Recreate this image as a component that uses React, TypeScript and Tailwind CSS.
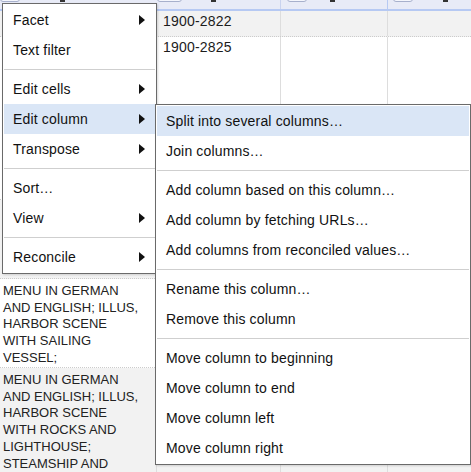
import React from 'react';

type Item = { label: string; sub?: boolean; active?: boolean } | 'sep';

const mainMenu: Item[] = [
  { label: 'Facet', sub: true },
  { label: 'Text filter' },
  'sep',
  { label: 'Edit cells', sub: true },
  { label: 'Edit column', sub: true, active: true },
  { label: 'Transpose', sub: true },
  'sep',
  { label: 'Sort…' },
  { label: 'View', sub: true },
  'sep',
  { label: 'Reconcile', sub: true },
];

const columnMenu: Item[] = [
  { label: 'Split into several columns…', active: true },
  { label: 'Join columns…' },
  'sep',
  { label: 'Add column based on this column…' },
  { label: 'Add column by fetching URLs…' },
  { label: 'Add columns from reconciled values…' },
  'sep',
  { label: 'Rename this column…' },
  { label: 'Remove this column' },
  'sep',
  { label: 'Move column to beginning' },
  { label: 'Move column to end' },
  { label: 'Move column left' },
  { label: 'Move column right' },
];

function Arrow() {
  return (
    <svg width="6" height="10" viewBox="0 0 6 10" className="shrink-0">
      <polygon points="0,0 6,5 0,10" fill="#111" />
    </svg>
  );
}

function Menu({ items, className }: { items: Item[]; className: string }) {
  return (
    <div className={`absolute bg-white border border-[#6a6a6a] p-[1px] shadow-[1px_1px_2px_rgba(0,0,0,0.15)] ${className}`}>
      {items.map((it, i) =>
        it === 'sep' ? (
          <div key={i} className="h-[9px] pt-[4px]">
            <div className="h-px w-full bg-[#cfcfcf]" />
          </div>
        ) : (
          <div
            key={i}
            className={`h-[30px] flex items-center justify-between pl-[9px] pr-[10px] ${
              it.active ? 'bg-[#dae6f6]' : ''
            }`}
          >
            <span className="whitespace-nowrap">{it.label}</span>
            {it.sub && <Arrow />}
          </div>
        )
      )}
    </div>
  );
}

function HeaderCell({ width, box, boxW, mark, border }: { width: string; box: string; boxW: string; mark: string; border?: string }) {
  return (
    <div className={`${width} flex items-start ${border ?? ''}`}>
      <div className={`${box} ${boxW} h-[10px] mt-[-8px] rounded-[3px] border border-[#a7b0cc] bg-[#f4f6fc]`} />
      <div className={`${mark} w-[5px] h-[2px] bg-[#333]`} />
    </div>
  );
}

export default function App() {
  return (
    <div className="relative w-[471px] h-[472px] overflow-hidden bg-white text-[#1c1c1c] font-['Liberation_Sans',Arial,sans-serif]">
      {/* data table behind the menus */}
      <div className="flex flex-col">
        <div className="flex h-[11px] bg-[#e8ebf7] border-b-2 border-[#b6c9f3] overflow-visible">
          <HeaderCell width="w-[157px]" box="ml-0" boxW="w-[20px]" mark="ml-[40px]" />
          <HeaderCell width="w-[124px]" box="ml-0" boxW="w-[25px]" mark="ml-[29px]" border="border-r border-[#c9d3ef]" />
          <HeaderCell width="w-[107px]" box="ml-[6px]" boxW="w-[20px]" mark="ml-[23px]" border="border-r border-[#b6c9f3]" />
          <HeaderCell width="flex-1" box="ml-[5px]" boxW="w-[20px]" mark="ml-[30px]" />
        </div>

        {/* row 1 */}
        <div className="flex h-[26px] bg-[#f2f2f2] border-b border-dotted border-[#cccccc] text-[14px] tracking-[0.2px] leading-[16.8px]">
          <div className="w-[157px] border-r border-[#dddddd]" />
          <div className="w-[124px] border-r border-[#dddddd] pl-[6px] pt-[2px]">1900-2822</div>
          <div className="w-[107px] border-r border-[#dddddd]" />
          <div className="flex-1" />
        </div>

        {/* row 2 */}
        <div className="flex h-[163px] bg-white border-b border-dotted border-[#cccccc] text-[14px] tracking-[0.2px] leading-[16.8px]">
          <div className="w-[157px] border-r border-[#dddddd]" />
          <div className="w-[124px] border-r border-[#dddddd] pl-[6px] pt-[2px]">1900-2825</div>
          <div className="w-[107px] border-r border-[#dddddd]" />
          <div className="flex-1" />
        </div>

        {/* row 3 */}
        <div className="flex h-[79px] bg-[#f2f2f2] border-b border-dotted border-[#cccccc]">
          <div className="w-[157px] border-r border-[#dddddd]" />
          <div className="w-[124px] border-r border-[#dddddd]" />
          <div className="w-[107px] border-r border-[#dddddd]" />
          <div className="flex-1" />
        </div>

        {/* row 4 */}
        <div className="flex h-[89px] bg-white border-b border-dotted border-[#cccccc] text-[13px] leading-[16.7px] text-[#222]">
          <div className="w-[157px] border-r border-[#dddddd] pl-[3px] pr-[16px] pt-[4px]">
            MENU IN GERMAN AND ENGLISH; ILLUS, HARBOR SCENE WITH SAILING VESSEL;
          </div>
          <div className="w-[124px] border-r border-[#dddddd]" />
          <div className="w-[107px] border-r border-[#dddddd]" />
          <div className="flex-1" />
        </div>

        {/* row 5 */}
        <div className="flex h-[104px] bg-[#f2f2f2] text-[13px] leading-[16.7px] text-[#222]">
          <div className="w-[157px] border-r border-[#dddddd] pl-[3px] pr-[16px] pt-[4px]">
            MENU IN GERMAN AND ENGLISH; ILLUS, HARBOR SCENE WITH ROCKS AND LIGHTHOUSE; STEAMSHIP AND
          </div>
          <div className="w-[124px] border-r border-[#dddddd]" />
          <div className="w-[107px] border-r border-[#dddddd]" />
          <div className="flex-1" />
        </div>
      </div>

      {/* column menu */}
      <div className="text-[14px] tracking-[0.16px] text-[#111]">
        <Menu items={mainMenu} className="left-[2px] top-[3px] w-[155px]" />
        <Menu items={columnMenu} className="left-[155px] top-[104px] w-[316px]" />
      </div>
    </div>
  );
}
